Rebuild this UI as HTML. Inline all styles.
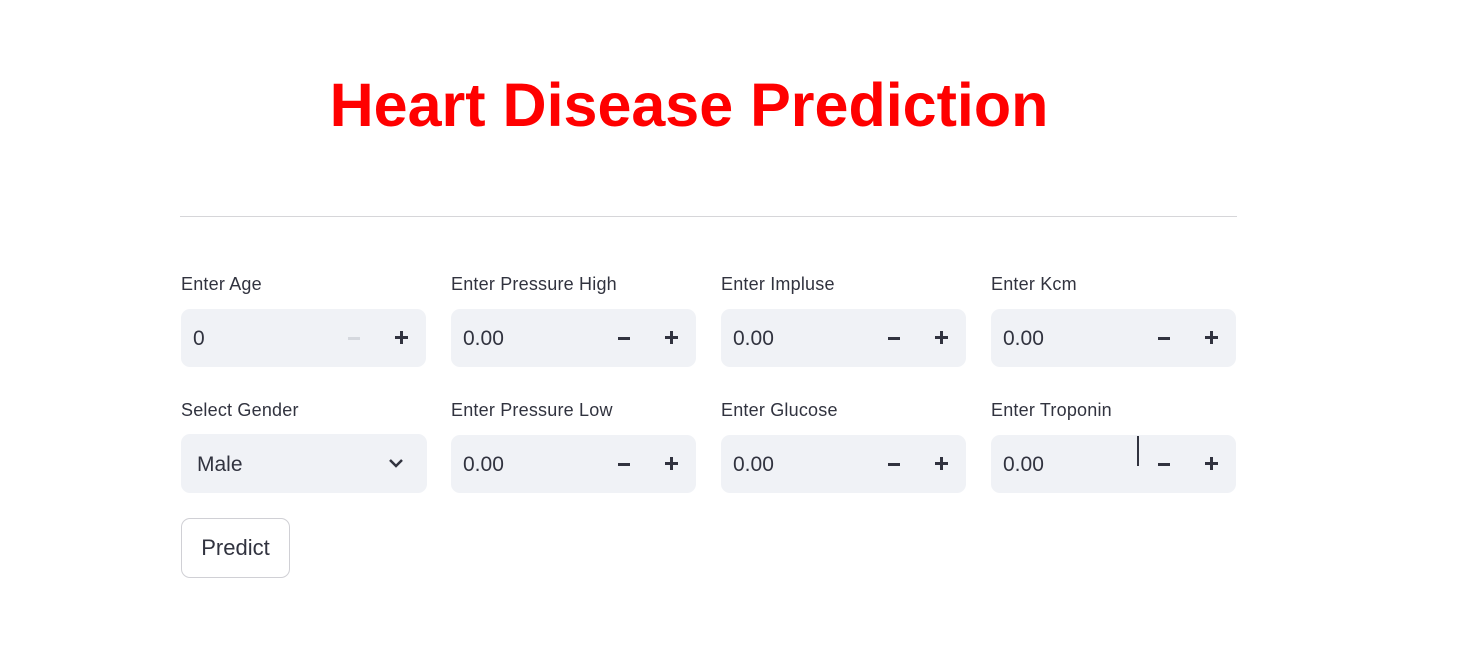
<!DOCTYPE html>
<html><head><style>
body{margin:0;width:1474px;height:663px;background:#fff;font-family:"Liberation Sans",sans-serif;color:#31333f;position:relative;overflow:hidden}
h1{position:absolute;left:0;width:1378px;top:70px;margin:0;text-align:center;color:#ff0000;font-size:61px;font-weight:bold;letter-spacing:0px}
.hr{position:absolute;left:180px;top:216px;width:1057px;height:1px;background:#d6d6d9}
.lbl{position:absolute;font-size:18px;color:#31333f;letter-spacing:0.2px}
.box{position:absolute;width:245px;height:58px;background:#f0f2f6;border-radius:9px}
.val{position:absolute;left:12px;top:18px;font-size:21px}
.mi{position:absolute;left:167px;top:28px;width:12px;height:3px;background:#31333f}
.pl{position:absolute;left:214px;top:22px;width:13px;height:13px}
.pl:before{content:"";position:absolute;left:0;top:5px;width:13px;height:3px;background:#31333f}
.pl:after{content:"";position:absolute;left:5px;top:0;width:3px;height:13px;background:#31333f}
.btn{position:absolute;left:181px;top:518px;width:109px;height:60px;border:1px solid #d0d0d5;border-radius:9px;font-size:22px;text-align:center;line-height:58px;box-sizing:border-box}
</style></head><body>
<h1>Heart Disease Prediction</h1>
<div class="hr"></div>

<div class="lbl" style="left:181px;top:274px">Enter Age</div>
<div class="lbl" style="left:451px;top:274px">Enter Pressure High</div>
<div class="lbl" style="left:721px;top:274px">Enter Impluse</div>
<div class="lbl" style="left:991px;top:274px">Enter Kcm</div>

<div class="box" style="left:181px;top:309px"><div class="val">0</div><div class="mi" style="background:#d5d8de"></div><div class="pl"></div></div>
<div class="box" style="left:451px;top:309px"><div class="val">0.00</div><div class="mi"></div><div class="pl"></div></div>
<div class="box" style="left:721px;top:309px"><div class="val">0.00</div><div class="mi"></div><div class="pl"></div></div>
<div class="box" style="left:991px;top:309px"><div class="val">0.00</div><div class="mi"></div><div class="pl"></div></div>

<div class="lbl" style="left:181px;top:400px">Select Gender</div>
<div class="lbl" style="left:451px;top:400px">Enter Pressure Low</div>
<div class="lbl" style="left:721px;top:400px">Enter Glucose</div>
<div class="lbl" style="left:991px;top:400px">Enter Troponin</div>

<div class="box" style="left:181px;top:434px;width:246px;height:59px"><div class="val" style="left:16px;top:19px">Male</div>
<svg style="position:absolute;left:206px;top:22px" width="18" height="14" viewBox="0 0 18 14"><path d="M3 4 L9 10 L15 4" fill="none" stroke="#31333f" stroke-width="2.5"/></svg></div>
<div class="box" style="left:451px;top:435px"><div class="val">0.00</div><div class="mi"></div><div class="pl"></div></div>
<div class="box" style="left:721px;top:435px"><div class="val">0.00</div><div class="mi"></div><div class="pl"></div></div>
<div class="box" style="left:991px;top:435px"><div class="val">0.00</div><div style="position:absolute;left:146px;top:1px;width:2px;height:30px;background:#31333f"></div><div class="mi"></div><div class="pl"></div></div>

<div class="btn">Predict</div>
</body></html>
